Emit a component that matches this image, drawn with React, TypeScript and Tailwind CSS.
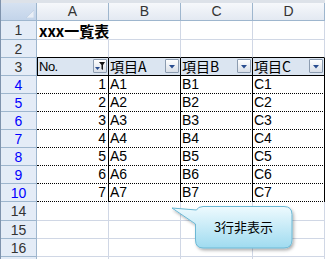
import React from "react";

const FONT = "font-['Liberation_Sans','Noto_Sans_CJK_JP',sans-serif]";
const CJK = "font-['Noto_Sans_CJK_JP','Liberation_Sans',sans-serif]";

const rows = [
  { n: 1, a: "A1", b: "B1", c: "C1" },
  { n: 2, a: "A2", b: "B2", c: "C2" },
  { n: 3, a: "A3", b: "B3", c: "C3" },
  { n: 4, a: "A4", b: "B4", c: "C4" },
  { n: 5, a: "A5", b: "B5", c: "C5" },
  { n: 6, a: "A6", b: "B6", c: "C6" },
  { n: 7, a: "A7", b: "B7", c: "C7" },
];

function RowHead({ label, blue, thick }: { label: string; blue?: boolean; thick?: boolean }) {
  return (
    <div
      className={`w-[36px] shrink-0 flex items-center justify-center border-r border-[#9eb6ce] bg-[#e4ecf7] text-[14px] leading-none ${
        thick ? "border-b-2 border-b-[#8ea5bf]" : "border-b"
      } ${blue ? "text-[#0000ff]" : "text-[#333]"}`}
    >
      {label}
    </div>
  );
}

function DropButton({ filter }: { filter?: boolean }) {
  return (
    <div className="mt-[1px] mr-[1px] w-[14px] h-[14px] shrink-0 border border-[#8c9cb0] rounded-[1px] bg-gradient-to-b from-white to-[#d9dfe8] flex items-center justify-center">
      <svg width="12" height="12" viewBox="0 0 12 12">
        {filter ? (
          <>
            <path d="M1 7 H6 L3.5 10 Z" fill="#2a4d8f" />
            <path d="M5 2 H11 L9 5 V10 L7.5 9 V5 Z" fill="#111" />
          </>
        ) : (
          <path d="M3 5 H9 L6 8.5 Z" fill="#2a4d8f" />
        )}
      </svg>
    </div>
  );
}

function EmptyRow({ label, h, topBlack, thick }: { label: string; h: string; topBlack?: boolean; thick?: boolean }) {
  const c = topBlack ? "border-b-black" : "border-b-[#d0d7e5]";
  return (
    <div className={`flex ${h}`}>
      <RowHead label={label} thick={thick} />
      {[0, 1, 2, 3].map((i) => (
        <div key={i} className={`w-[72px] shrink-0 border-r border-b border-r-[#d0d7e5] ${c}`} />
      ))}
      <div className="flex-1 border-b border-[#d0d7e5]" />
    </div>
  );
}

export default function App() {
  return (
    <div className={`relative w-[325px] h-[259px] overflow-hidden bg-white border-l border-[#7f93ad] ${FONT}`}>
      {/* top strip */}
      <div className="h-[3px] bg-[#dde2e9]" />

      {/* column headers */}
      <div className="flex h-[18px]">
        <div className="w-[36px] shrink-0 border-r border-b border-[#9eb6ce] bg-gradient-to-b from-[#d6e2f1] to-[#c3d4ea] flex items-end justify-end p-[2px]">
          <svg width="8" height="8" viewBox="0 0 8 8">
            <path d="M8 0 V8 H0 Z" fill="#e8eef6" stroke="#b5c6dc" strokeWidth="0.5" />
          </svg>
        </div>
        {["A", "B", "C", "D"].map((l) => (
          <div
            key={l}
            className="w-[72px] shrink-0 border-r border-b border-[#9eb6ce] bg-gradient-to-b from-[#f6f8fb] to-[#e3e9f2] flex items-center justify-center text-[14px] text-[#333]"
          >
            {l}
          </div>
        ))}
        <div className="flex-1 border-b border-[#9eb6ce] bg-gradient-to-b from-[#f6f8fb] to-[#e3e9f2]" />
      </div>

      {/* row 1 */}
      <div className="flex h-[19px]">
        <RowHead label="1" />
        <div className="w-[72px] shrink-0 border-b border-[#d0d7e5] relative">
          <span className={`absolute left-[2px] top-[0px] whitespace-nowrap text-[15px] font-bold text-black ${CJK} leading-[19px]`}>
            xxx一覧表
          </span>
        </div>
        {[0, 1, 2].map((i) => (
          <div key={i} className="w-[72px] shrink-0 border-r border-b border-[#d0d7e5]" />
        ))}
        <div className="flex-1 border-b border-[#d0d7e5]" />
      </div>

      {/* row 2 */}
      <EmptyRow label="2" h="h-[18px]" topBlack />

      {/* row 3: table header */}
      <div className="flex h-[18px]">
        <RowHead label="3" />
        <div className="w-[72px] shrink-0 border-l border-r border-b border-black bg-[#dbe5f1] flex justify-between text-[13px] text-black">
          <span className="pl-[1px] leading-[17px] tracking-[-0.5px]">No.</span>
          <DropButton filter />
        </div>
        {["項目A", "項目B", "項目C"].map((t) => (
          <div key={t} className="w-[72px] shrink-0 border-r border-b border-black bg-[#dbe5f1] flex justify-between text-black">
            <span className={`pl-[1px] text-[14px] leading-[17px] ${CJK}`}>{t}</span>
            <DropButton />
          </div>
        ))}
        <div className="flex-1 border-b border-[#d0d7e5]" />
      </div>

      {/* data rows */}
      {rows.map((r) => (
        <div key={r.n} className="flex h-[18px] text-[14px] text-black">
          <RowHead label={String(r.n + 3)} blue />
          <div className="w-[72px] shrink-0 border-r border-r-black border-b border-b-black [border-bottom-style:dotted] flex items-center justify-end pr-[2px]">
            {r.n}
          </div>
          {[r.a, r.b, r.c].map((v) => (
            <div
              key={v}
              className="w-[72px] shrink-0 border-r border-r-black border-b border-b-black [border-bottom-style:dotted] flex items-center pl-[1px]"
            >
              {v}
            </div>
          ))}
          <div className="flex-1 border-b border-[#d0d7e5]" />
        </div>
      ))}

      {/* rows after the hidden ones */}
      <EmptyRow label="14" h="h-[19px]" />
      <EmptyRow label="15" h="h-[18px]" />
      <EmptyRow label="16" h="h-[18px]" />
      <EmptyRow label="" h="h-[18px]" />

      {/* speech bubble */}
      <svg className="absolute left-[168px] top-[203px]" width="130" height="54" viewBox="0 0 130 54">
        <defs>
          <linearGradient id="bub" x1="0" y1="0" x2="0" y2="1">
            <stop offset="0" stopColor="#eefafe" />
            <stop offset="1" stopColor="#9fdbf0" />
          </linearGradient>
          <filter id="sh" x="-10%" y="-10%" width="130%" height="140%">
            <feDropShadow dx="1.5" dy="2" stdDeviation="1.5" floodColor="#000" floodOpacity="0.3" />
          </filter>
        </defs>
        <path
          d="M34 3.5 H115 Q123 3.5 123 11.5 V37 Q123 45 115 45 H34 Q26.5 45 26.5 37 V21 L3 5 L27.5 7 Q29 3.5 34 3.5 Z"
          fill="url(#bub)"
          stroke="#6cb8d5"
          strokeWidth="1"
          filter="url(#sh)"
        />
      </svg>
      <div className={`absolute left-[194px] top-[206px] w-[97px] h-[42px] flex items-center justify-center text-[13px] text-black ${CJK}`}>
        3行非表示
      </div>
    </div>
  );
}
